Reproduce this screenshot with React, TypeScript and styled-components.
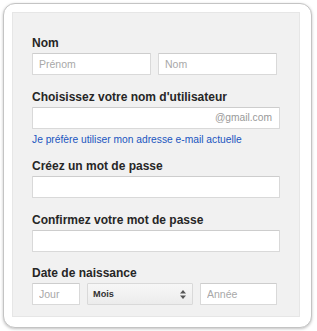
import React from "react";
import styled, { createGlobalStyle } from "styled-components";

const Global = createGlobalStyle`
  html, body { margin: 0; padding: 0; background: #ffffff; }
  body { font-family: "Liberation Sans", Arial, sans-serif; }
  * { box-sizing: border-box; }
`;

const Page = styled.div`
  padding: 3px;
  width: 317px;
  height: 331px;
`;

const Card = styled.div`
  width: 309px;
  height: 325px;
  border: 1px solid #c4c4c4;
  border-radius: 12px;
  background: #fff;
  box-shadow: 0 1px 3px rgba(0, 0, 0, 0.25);
  padding: 8px 11px 10px 8px;
`;

const Panel = styled.div`
  height: 100%;
  background: #f1f1f1;
  border: 1px solid #e6e6e6;
  padding: 23px 0 0 19px;
  display: flex;
  flex-direction: column;
`;

const Field = styled.div<{ $mt?: number }>`
  display: flex;
  flex-direction: column;
  margin-top: ${(p) => p.$mt ?? 0}px;
`;

const Label = styled.div`
  font-size: 12px;
  line-height: 14px;
  font-weight: bold;
  color: #262626;
  margin-bottom: 3px;
`;

const Row = styled.div`
  display: flex;
  gap: 7px;
`;

const TextInput = styled.input<{ $w: number }>`
  width: ${(p) => p.$w}px;
  height: 22px;
  border: 1px solid #d9d9d9;
  border-top-color: #cdcdcd;
  background: #fff;
  padding: 0 6px;
  font-family: "Liberation Sans", Arial, sans-serif;
  font-size: 10.5px;
  color: #222;
  outline: none;
  border-radius: 1px;
  &::placeholder { color: #a8a8a8; }
`;

const InputWrap = styled.div`
  position: relative;
  width: 248px;
`;

const Suffix = styled.span`
  position: absolute;
  right: 8px;
  top: 0;
  line-height: 22px;
  font-size: 10.25px;
  color: #999;
`;

const Link = styled.a`
  margin-top: 4px;
  font-size: 10.25px;
  line-height: 14px;
  color: #1a55c0;
  text-decoration: none;
`;

const Select = styled.div`
  width: 106px;
  height: 22px;
  border: 1px solid #d9d9d9;
  background: linear-gradient(#f7f7f7, #ececec);
  display: flex;
  align-items: center;
  justify-content: space-between;
  padding: 0 6px 0 5px;
  font-size: 9.2px;
  font-weight: bold;
  color: #333;
  border-radius: 1px;
`;

const Arrows = () => (
  <svg width="6" height="9" viewBox="0 0 6 9">
    <path d="M3 0 L6 3.5 L0 3.5 Z" fill="#555" />
    <path d="M3 9 L6 5.5 L0 5.5 Z" fill="#555" />
  </svg>
);

export default function App() {
  return (
    <>
      <Global />
      <Page>
        <Card>
          <Panel>
            <Field>
              <Label>Nom</Label>
              <Row>
                <TextInput $w={119} placeholder="Prénom" />
                <TextInput $w={119} placeholder="Nom" />
              </Row>
            </Field>
            <Field $mt={15}>
              <Label>Choisissez votre nom d'utilisateur</Label>
              <InputWrap>
                <TextInput $w={248} />
                <Suffix>@gmail.com</Suffix>
              </InputWrap>
              <Link href="#">Je préfère utiliser mon adresse e-mail actuelle</Link>
            </Field>
            <Field $mt={12}>
              <Label>Créez un mot de passe</Label>
              <TextInput $w={248} type="password" />
            </Field>
            <Field $mt={15}>
              <Label>Confirmez votre mot de passe</Label>
              <TextInput $w={248} type="password" />
            </Field>
            <Field $mt={14}>
              <Label>Date de naissance</Label>
              <Row>
                <TextInput $w={48} placeholder="Jour" />
                <Select>
                  <span>Mois</span>
                  <Arrows />
                </Select>
                <TextInput $w={77} placeholder="Année" />
              </Row>
            </Field>
          </Panel>
        </Card>
      </Page>
    </>
  );
}
